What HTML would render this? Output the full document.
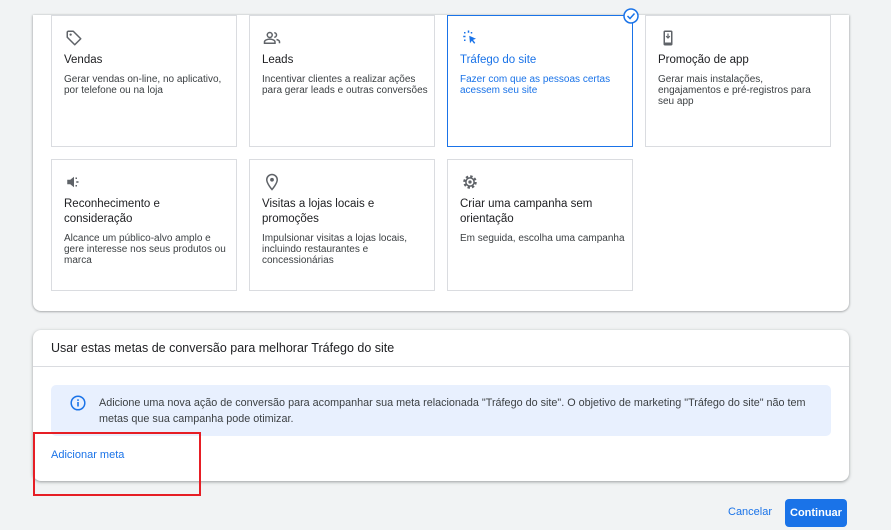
<!DOCTYPE html>
<html><head><meta charset="utf-8"><style>
*{box-sizing:border-box;margin:0;padding:0}
body{width:891px;height:530px;background:#f1f3f4;font-family:"Liberation Sans",Arial,sans-serif;position:relative;overflow:hidden;color:#202124}
.panel{position:absolute;left:33px;width:816px;background:#fff;border-radius:8px;box-shadow:0 1px 2px rgba(60,64,67,.3),0 1px 3px 1px rgba(60,64,67,.15)}
.card{position:absolute;width:186px;height:132px;border:1px solid #dadce0;background:#fff}
.card svg{position:absolute;left:13px;top:13px}
.card h3{position:absolute;left:12px;top:37px;font-size:11.5px;font-weight:normal;line-height:15px;color:#202124;white-space:nowrap}
.card p{position:absolute;left:12px;font-size:10px;line-height:11px;color:#3c4043;white-space:nowrap}
.sel{border-color:#1a73e8}
.sel h3,.sel p{color:#1a73e8}
</style></head><body>
<div class="panel" style="top:15px;height:296px;border-radius:0 0 8px 8px;box-shadow:0 1px 2px rgba(60,64,67,.3),1px 0 2px rgba(60,64,67,.15),-1px 0 2px rgba(60,64,67,.15)"></div>
<div class="card" style="left:51px;top:15px">
<svg width="18" height="18" viewBox="0 0 24 24"><path d="M3 4v7l10 10 8-8L11 3H4z" fill="none" stroke="#5f6368" stroke-width="2" stroke-linejoin="round"/><circle cx="7.5" cy="7.5" r="1.5" fill="#5f6368"/></svg>
<h3>Vendas</h3><p style="top:58px">Gerar vendas on-line, no aplicativo,<br>por telefone ou na loja</p></div>
<div class="card" style="left:249px;top:15px">
<svg width="18" height="18" viewBox="0 0 24 24"><circle cx="9" cy="8" r="3.3" fill="none" stroke="#5f6368" stroke-width="2"/><path d="M2 19v-2c0-2 4-3.5 7-3.5s7 1.5 7 3.5v2z" fill="none" stroke="#5f6368" stroke-width="2"/><path d="M15 5a3 3 0 0 1 0 6M18 14c2 .5 4 1.5 4 3v2" fill="none" stroke="#5f6368" stroke-width="2"/></svg>
<h3>Leads</h3><p style="top:58px">Incentivar clientes a realizar ações<br>para gerar leads e outras conversões</p></div>
<div class="card sel" style="left:447px;top:15px">
<svg width="18" height="18" viewBox="0 0 24 24"><path d="M11 9l9 4-4 1.5 3 4-1.5 1.2-3-4L12 19z" fill="#1a73e8"/><g fill="#1a73e8"><rect x="3" y="9" width="3" height="2"/><rect x="9" y="2" width="2" height="3"/><rect x="4" y="4" width="2" height="2"/><rect x="13" y="4" width="2" height="2"/><rect x="4" y="14" width="2" height="2"/></g></svg>
<h3>Tráfego do site</h3><p style="top:58px">Fazer com que as pessoas certas<br>acessem seu site</p></div>
<svg style="position:absolute;left:623px;top:8px" width="16" height="16" viewBox="0 0 16 16"><circle cx="8" cy="8" r="7" fill="#fff" stroke="#1a73e8" stroke-width="1.5"/><path d="M4.5 8l2.5 2.5 4.5-5" fill="none" stroke="#1a73e8" stroke-width="1.5"/></svg>
<div class="card" style="left:645px;top:15px">
<svg width="18" height="18" viewBox="0 0 24 24"><rect x="6" y="2" width="12" height="20" rx="2" fill="#5f6368"/><rect x="8" y="4" width="8" height="14" fill="#fff"/><path d="M12 6v6M9.5 9.5L12 12l2.5-2.5" fill="none" stroke="#5f6368" stroke-width="1.6"/></svg>
<h3>Promoção de app</h3><p style="top:58px">Gerar mais instalações,<br>engajamentos e pré-registros para<br>seu app</p></div>
<div class="card" style="left:51px;top:159px">
<svg width="18" height="18" viewBox="0 0 24 24"><path d="M3 9h4l5-4v14l-5-4H3z" fill="#5f6368"/><g fill="#5f6368"><rect x="15" y="11" width="3" height="2"/><rect x="14" y="6" width="2" height="2"/><rect x="14" y="16" width="2" height="2"/></g></svg>
<h3>Reconhecimento e<br>consideração</h3><p style="top:73px">Alcance um público-alvo amplo e<br>gere interesse nos seus produtos ou<br>marca</p></div>
<div class="card" style="left:249px;top:159px">
<svg width="18" height="18" viewBox="0 0 24 24"><path d="M12 2a7 7 0 0 0-7 7c0 5 7 13 7 13s7-8 7-13a7 7 0 0 0-7-7z" fill="none" stroke="#5f6368" stroke-width="2"/><circle cx="12" cy="9" r="2.5" fill="#5f6368"/></svg>
<h3>Visitas a lojas locais e<br>promoções</h3><p style="top:73px">Impulsionar visitas a lojas locais,<br>incluindo restaurantes e<br>concessionárias</p></div>
<div class="card" style="left:447px;top:159px">
<svg width="18" height="18" viewBox="0 0 24 24"><circle cx="12" cy="12" r="7" fill="none" stroke="#5f6368" stroke-width="4" stroke-dasharray="3 2.5"/><circle cx="12" cy="12" r="5.5" fill="none" stroke="#5f6368" stroke-width="2"/><circle cx="12" cy="12" r="2.2" fill="#5f6368"/></svg>
<h3>Criar uma campanha sem<br>orientação</h3><p style="top:73px">Em seguida, escolha uma campanha</p></div>

<div class="panel" style="top:330px;height:151px">
<div style="position:absolute;left:18px;top:11px;font-size:12.5px;color:#202124">Usar estas metas de conversão para melhorar Tráfego do site</div>
<div style="position:absolute;left:0;right:0;top:36px;border-top:1px solid #dadce0"></div>
<div style="position:absolute;left:18px;top:55px;width:780px;height:51px;background:#e8f0fe;border-radius:5px">
<svg style="position:absolute;left:19px;top:10px" width="16" height="16" viewBox="0 0 16 16"><circle cx="8" cy="8" r="6.8" fill="none" stroke="#1a73e8" stroke-width="1.5"/><rect x="7.2" y="7" width="1.6" height="4.5" fill="#1a73e8"/><rect x="7.2" y="4.3" width="1.6" height="1.6" fill="#1a73e8"/></svg>
<div style="position:absolute;left:48px;top:10px;font-size:10.8px;line-height:16px;color:#3c4043;white-space:nowrap">Adicione uma nova ação de conversão para acompanhar sua meta relacionada "Tráfego do site". O objetivo de marketing "Tráfego do site" não tem<br>metas que sua campanha pode otimizar.</div>
</div>
<div style="position:absolute;left:18px;top:119px;font-size:11px;color:#1a73e8">Adicionar meta</div>
</div>
<div style="position:absolute;left:33px;top:432px;width:168px;height:64px;border:2px solid #e61e25"></div>
<div style="position:absolute;left:728px;top:506px;font-size:11px;color:#1a73e8">Cancelar</div>
<div style="position:absolute;left:785px;top:499px;width:62px;height:28px;background:#1a73e8;border-radius:4px;color:#fff;font-size:11px;font-weight:bold;text-align:center;line-height:28px">Continuar</div>
</body></html>
